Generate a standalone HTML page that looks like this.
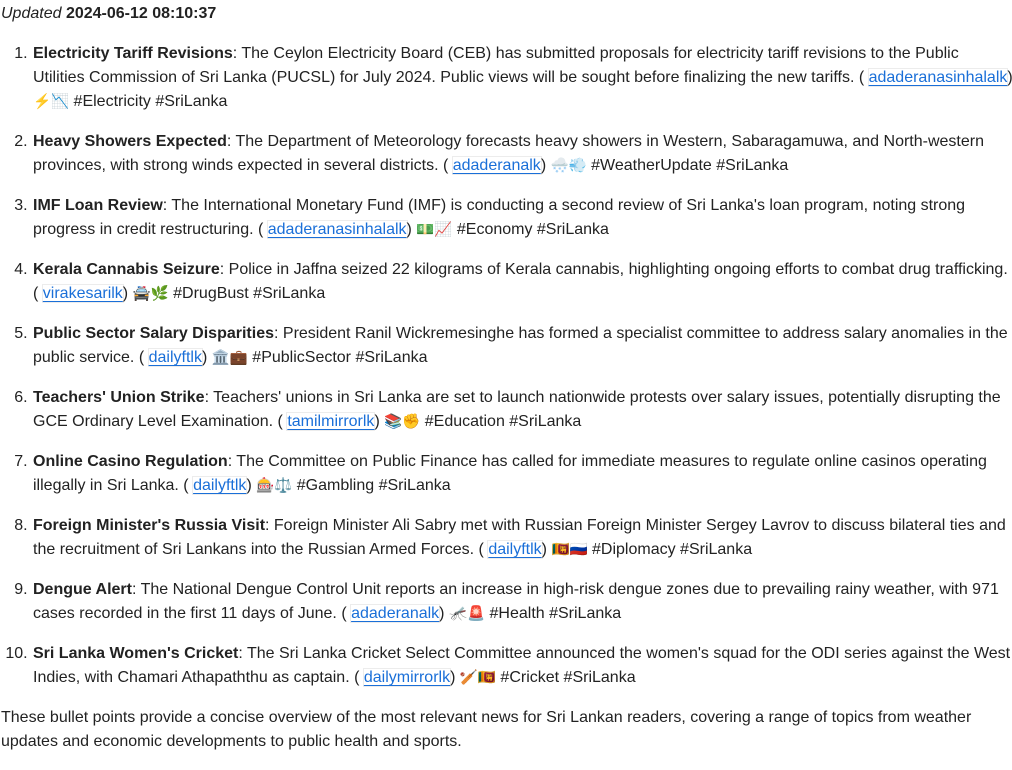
<!DOCTYPE html>
<html><head><meta charset="utf-8"><style>
html{overflow:hidden}
body{margin:0;padding:2px 0 0 1px;font-family:"Liberation Sans","Noto Sans CJK JP",sans-serif;font-size:16px;line-height:24px;color:#222;background:#fff;width:1011px}
p{margin:0 0 16px}
ol{margin:0 0 16px;padding-left:31px}
li{margin:0 0 16px;padding-left:1px}
li:last-child{margin-bottom:0}
a{color:#1a6fd8;text-decoration:underline;text-underline-offset:3px;box-shadow:0 0 0 1px #ececec}
b{color:#222}
.e{font-size:14.5px;line-height:16px}
</style></head><body>
<p><i>Updated</i> <b>2024-06-12 08:10:37</b></p>
<ol>
<li style="width:1000px;white-space:nowrap"><b>Electricity Tariff Revisions</b>: The Ceylon Electricity Board (CEB) has submitted proposals for electricity tariff revisions to the Public<br>Utilities Commission of Sri Lanka (PUCSL) for July 2024. Public views will be sought before finalizing the new tariffs. ( <a>adaderanasinhalalk</a>)<br><span class="e">⚡📉</span> #Electricity #SriLanka</li>
<li><b>Heavy Showers Expected</b>: The Department of Meteorology forecasts heavy showers in Western, Sabaragamuwa, and North-western provinces, with strong winds expected in several districts. ( <a>adaderanalk</a>) <span class="e">🌨️💨</span> #WeatherUpdate #SriLanka</li>
<li><b>IMF Loan Review</b>: The International Monetary Fund (IMF) is conducting a second review of Sri Lanka's loan program, noting strong progress in credit restructuring. ( <a>adaderanasinhalalk</a>) <span class="e">💵📈</span> #Economy #SriLanka</li>
<li><b>Kerala Cannabis Seizure</b>: Police in Jaffna seized 22 kilograms of Kerala cannabis, highlighting ongoing efforts to combat drug trafficking. ( <a>virakesarilk</a>) <span class="e">🚔🌿</span> #DrugBust #SriLanka</li>
<li><b>Public Sector Salary Disparities</b>: President Ranil Wickremesinghe has formed a specialist committee to address salary anomalies in the public service. ( <a>dailyftlk</a>) <span class="e">🏛️💼</span> #PublicSector #SriLanka</li>
<li><b>Teachers' Union Strike</b>: Teachers' unions in Sri Lanka are set to launch nationwide protests over salary issues, potentially disrupting the GCE Ordinary Level Examination. ( <a>tamilmirrorlk</a>) <span class="e">📚✊</span> #Education #SriLanka</li>
<li><b>Online Casino Regulation</b>: The Committee on Public Finance has called for immediate measures to regulate online casinos operating illegally in Sri Lanka. ( <a>dailyftlk</a>) <span class="e">🎰⚖️</span> #Gambling #SriLanka</li>
<li><b>Foreign Minister's Russia Visit</b>: Foreign Minister Ali Sabry met with Russian Foreign Minister Sergey Lavrov to discuss bilateral ties and the recruitment of Sri Lankans into the Russian Armed Forces. ( <a>dailyftlk</a>) <span class="e">🇱🇰🇷🇺</span> #Diplomacy #SriLanka</li>
<li><b>Dengue Alert</b>: The National Dengue Control Unit reports an increase in high-risk dengue zones due to prevailing rainy weather, with 971 cases recorded in the first 11 days of June. ( <a>adaderanalk</a>) <span class="e">🦟🚨</span> #Health #SriLanka</li>
<li><b>Sri Lanka Women's Cricket</b>: The Sri Lanka Cricket Select Committee announced the women's squad for the ODI series against the West Indies, with Chamari Athapaththu as captain. ( <a>dailymirrorlk</a>) <span class="e">🏏🇱🇰</span> #Cricket #SriLanka</li>
</ol>
<p>These bullet points provide a concise overview of the most relevant news for Sri Lankan readers, covering a range of topics from weather updates and economic developments to public health and sports.</p>
</body></html>
